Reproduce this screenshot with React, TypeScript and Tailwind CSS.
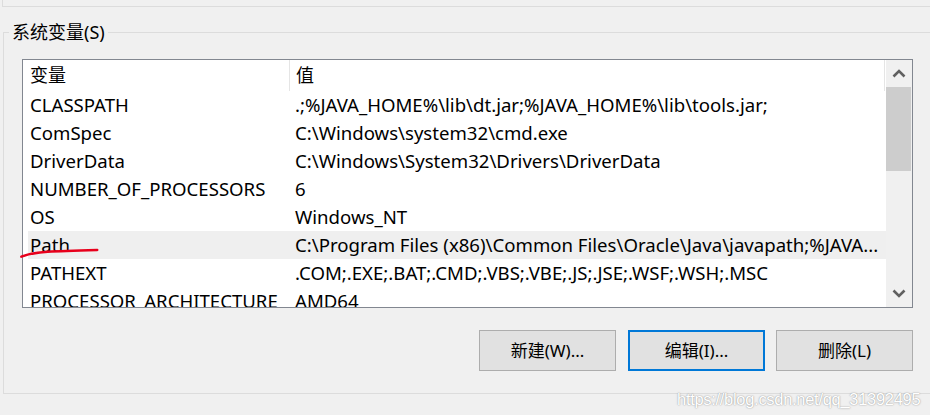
import React from "react";

const rows: [string, string][] = [
  ["CLASSPATH", ".;%JAVA_HOME%\\lib\\dt.jar;%JAVA_HOME%\\lib\\tools.jar;"],
  ["ComSpec", "C:\\Windows\\system32\\cmd.exe"],
  ["DriverData", "C:\\Windows\\System32\\Drivers\\DriverData"],
  ["NUMBER_OF_PROCESSORS", "6"],
  ["OS", "Windows_NT"],
  ["Path", "C:\\Program Files (x86)\\Common Files\\Oracle\\Java\\javapath;%JAVA..."],
  ["PATHEXT", ".COM;.EXE;.BAT;.CMD;.VBS;.VBE;.JS;.JSE;.WSF;.WSH;.MSC"],
  ["PROCESSOR_ARCHITECTURE", "AMD64"],
];

function Chevron({ up }: { up: boolean }) {
  return (
    <svg width="14" height="9" viewBox="0 0 14 9">
      <path
        d={up ? "M1.5 7.5 L7 2 L12.5 7.5" : "M1.5 1.5 L7 7 L12.5 1.5"}
        fill="none"
        stroke="#606060"
        strokeWidth="2.6"
      />
    </svg>
  );
}

function Btn({ label, focused }: { label: string; focused?: boolean }) {
  return (
    <div
      className={
        "w-[137px] h-[41px] flex items-center justify-center bg-[#e1e1e1] text-[17px] text-black " +
        (focused ? "border-2 border-[#0078d7]" : "border border-[#adadad]")
      }
    >
      {label}
    </div>
  );
}

export default function App() {
  return (
    <div
      className="relative w-[930px] h-[415px] overflow-hidden bg-[#f0f0f0] text-black"
      style={{ fontFamily: '"Noto Sans", "Noto Sans CJK SC", sans-serif' }}
    >
      <div className="ml-[2px] h-[7px] border-l border-b border-[#dcdcdc]" />
      <div className="relative mt-[25px] ml-[3px] w-[940px] h-[362px] border-t border-l border-b border-[#dcdcdc]">
        <div className="absolute left-[5px] top-[-13px] px-[3px] bg-[#f0f0f0] text-[18px] leading-[24px]">
          系统变量(S)
        </div>
        <div className="ml-[18px] mt-[26px] w-[891px]">
          <div className="h-[249px] border border-[#828790] bg-white flex">
            <div className="flex-1 overflow-hidden">
              <div className="h-[31px] flex text-[18px]">
                <div className="w-[266px] shrink-0 pl-[7px] flex items-center">变量</div>
                <div className="w-px shrink-0 h-full bg-[#e5e5e5]" />
                <div className="w-[594px] shrink-0 pl-[6px] flex items-center">值</div>
                <div className="w-px shrink-0 h-full bg-[#e5e5e5]" />
              </div>
              {rows.map(([n, v]) => (
                <div
                  key={n}
                  className={
                    "ml-[5px] h-[28px] flex items-center text-[18.6px] whitespace-nowrap " +
                    (n === "Path" ? "bg-[#efefef]" : "")
                  }
                >
                  <div className="w-[263px] shrink-0 pl-[2px] overflow-hidden">{n}</div>
                  <div className="shrink-0 pl-[4px]">{v}</div>
                </div>
              ))}
            </div>
            <div className="w-[26px] shrink-0 bg-[#f0f0f0] flex flex-col">
              <div className="h-[27px] flex items-center justify-center">
                <Chevron up />
              </div>
              <div className="h-[84px] mr-[1px] bg-[#cdcdcd]" />
              <div className="flex-1" />
              <div className="h-[27px] flex items-center justify-center">
                <Chevron up={false} />
              </div>
            </div>
          </div>
          <div className="mt-[22px] flex justify-end gap-[11px]">
            <div className="mr-[1px]">
              <Btn label="新建(W)..." />
            </div>
            <Btn label="编辑(I)..." focused />
            <Btn label="删除(L)" />
          </div>
        </div>
      </div>
      <svg
        className="absolute left-[18px] top-[246px]"
        width="84"
        height="14"
        viewBox="18 246 84 14"
      >
        <path
          d="M21.3 256.7 C 28 254, 33 253, 45 252 S 80 250.5, 97.3 250"
          fill="none"
          stroke="#e8001c"
          strokeWidth="2.4"
          strokeLinecap="round"
        />
      </svg>
      <div
        className="absolute left-[677px] top-[387px] text-[16.5px] text-white [text-shadow:0_0_1.5px_rgba(0,0,0,0.5)] tracking-[-0.3px]"
        style={{ fontFamily: '"Liberation Sans", Arial, sans-serif' }}
      >
        https://blog.csdn.net/qq_31392495
      </div>
    </div>
  );
}
